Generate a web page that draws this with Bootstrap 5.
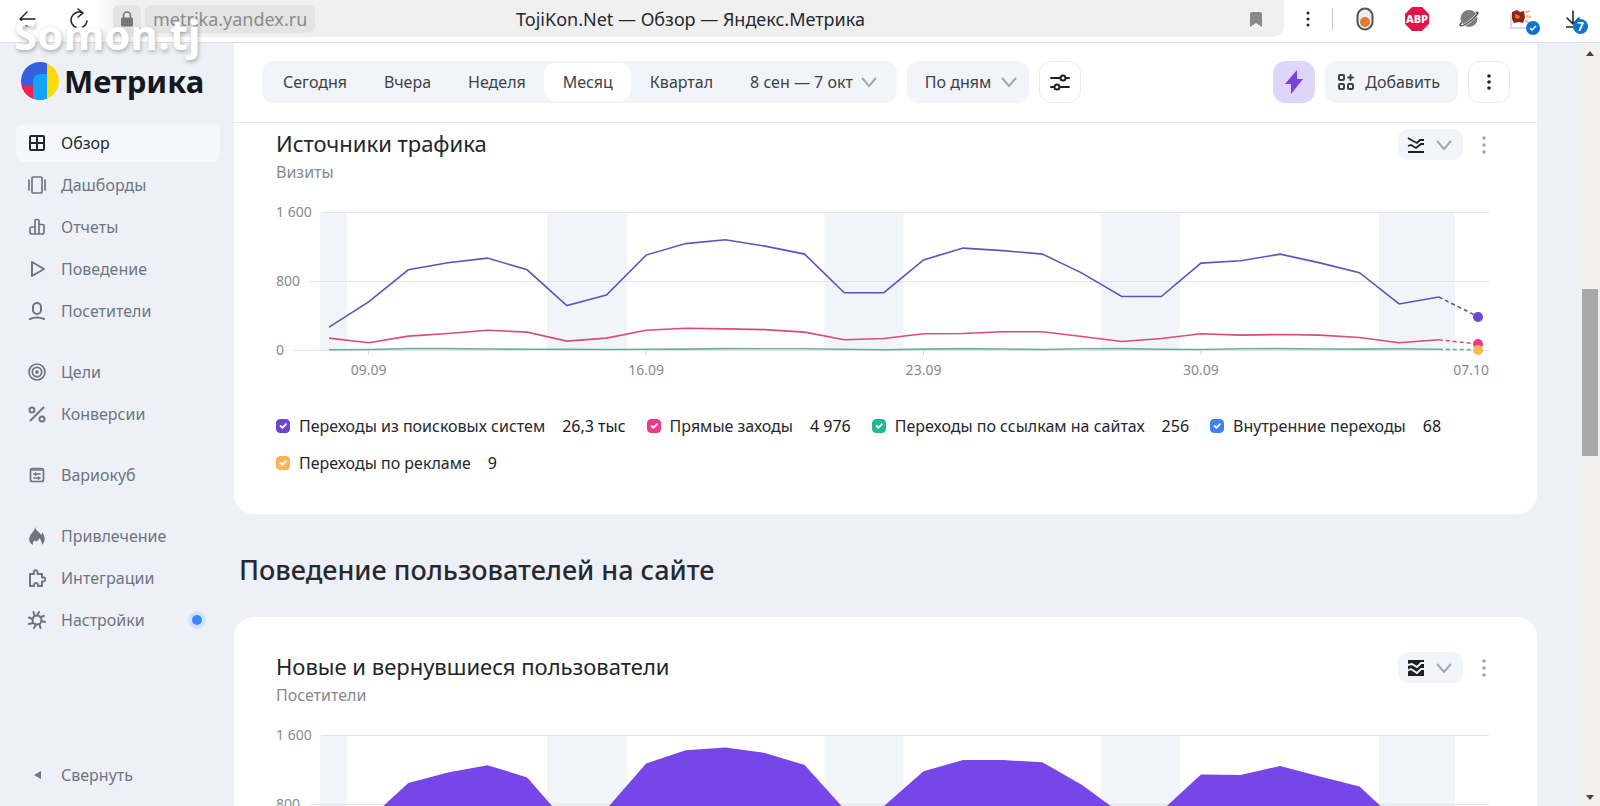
<!DOCTYPE html>
<html lang="ru">
<head>
<meta charset="utf-8">
<meta name="viewport" content="width=device-width, initial-scale=1">
<title>TojiKon.Net — Обзор — Яндекс.Метрика</title>
<link href="https://cdn.jsdelivr.net/npm/bootstrap@5.3.0/dist/css/bootstrap.min.css" rel="stylesheet">
<style>
  :root { --ink: #26282e; --dim: #6f7580; --page: #edf1f7; --soft: #f1f4f9; --hair: #e4e6ea; }
  body { font-family: "Noto Sans", "Open Sans", sans-serif; font-size: 16px; line-height: 24px; color: var(--ink); background: var(--page); }
  svg { display: block; flex: none; }
  .ln { fill: none; stroke: currentColor; stroke-width: 2; stroke-linecap: round; stroke-linejoin: round; }

  /* browser chrome */
  .chrome { height: 43px; background: #fff; border-bottom: 1px solid #dedfe2; }
  .navkeys { width: 97px; height: 38px; padding-left: 18px; gap: 33px; }
  .omnibox { display: grid; grid-template-columns: 1fr auto 1fr; height: 37px; border-radius: 0 0 10px 0; background: linear-gradient(90deg, #fff, #f0f0f0 24px); font-size: 18px; }
  .chip { background: #e4e4e4; height: 28px; border-radius: 6px; color: #8b8b8b; }
  .chip-lock { width: 28px; }
  .tools { width: 316px; height: 38px; padding-left: 22px; }
  .tools .vr { margin: 8px 6px 8px 22px; }
  .tool { width: 52px; display: flex; justify-content: center; }
  .tiny { position: absolute; right: -8px; bottom: -6px; }

  .watermark { position: absolute; left: 14px; top: 6px; font-size: 42px; line-height: 56px; font-weight: 700; color: #fff; text-shadow: 1px 2px 4px rgba(0,0,0,.3); pointer-events: none; }

  /* sidebar */
  .side { width: 234px; padding: 19px 14px 10px 16px; }
  .brand { font-size: 31px; line-height: 38px; font-weight: 700; color: #16181f; gap: 5px; padding-left: 5px; margin-bottom: 22px; text-decoration: none; }
  .side .nav-link { height: 38px; margin: 2px 0; padding: 0 12px; gap: 15px; display: flex; align-items: center; color: var(--dim); border-radius: 8px; }
  .side .nav-link svg { width: 18px; height: 18px; }
  .side .nav-link.active { background: #f5f8fd; color: var(--ink); }
  .side .split { margin-top: 21px; }
  .pulse { width: 10px; height: 10px; background: #3d86fb; box-shadow: 0 0 0 4px #cfe2fd; margin-right: 6px; }

  /* toolbar */
  .bar { height: 80px; background: #fff; padding: 18px 27px 0 28px; border-bottom: 1px solid var(--hair); gap: 10px; }
  .seg { background: var(--soft); border-radius: 12px; padding: 2px; height: 42px; }
  .seg .btn { border: 0; border-radius: 12px; padding: 0 18px 0 19px; height: 38px; color: #3f4148; display: flex; align-items: center; gap: 8px; }
  .seg .btn.active { background: #fff; color: #3f4148; }
  .sel { width: 122px; height: 42px; border: 0; border-radius: 12px; padding: 0 18px; background-color: var(--soft); color: #3f4148; font-size: 16px;
    --bs-form-select-bg-img: url("data:image/svg+xml,%3csvg xmlns='http://www.w3.org/2000/svg' viewBox='0 0 16 16'%3e%3cpath fill='none' stroke='%23a3a7b3' stroke-width='2' d='M1 4l7 8 7-8'/%3e%3c/svg%3e"); background-position: right 12px center; background-size: 16px 16px; }
  .sq { width: 42px; height: 42px; border-radius: 12px; border: 1px solid #e9ebf0; padding: 0; display: flex; align-items: center; justify-content: center; color: #1f2127; background: #fff; }
  .sq.bolt { background: #dfd5fa; border-color: #dfd5fa; color: #7544dd; }
  .add { height: 42px; border: 0; border-radius: 12px; background: var(--soft); padding: 0 18px 0 13px; display: flex; align-items: center; gap: 11px; color: #3f4148; }

  /* panels */
  .main { margin-right: 45px; min-width: 0; }
  .panel { background: #fff; border-radius: 0 0 20px 20px; padding: 0 48px 39px 42px; }
  .panel.full { border-radius: 20px; padding-top: 29px; }
  .panel h3 { font-size: 22px; line-height: 33px; font-weight: 400; margin: 0; padding-top: 4px; color: #22252b; }
  .panel .unit { color: #868a90; margin-bottom: 18px; }
  .actions { gap: 16px; padding-top: 6px; }
  .kind { height: 31px; width: 65px; border: 0; border-radius: 10px; background: var(--soft); padding: 0 11px 0 9px; display: flex; align-items: center; justify-content: space-between; color: #1f2127; }
  .more { border: 0; padding: 0; width: 10px; height: 31px; color: #a2a5ad; display: flex; align-items: center; justify-content: center; }
  .section { font-size: 27px; line-height: 40px; font-weight: 500; margin: 0; padding: 36px 5px 27px; color: #262932; }

  /* chart */
  .chart { position: relative; font-size: 14px; line-height: 20px; color: #868a90; }
  .gridline { height: 20px; margin-bottom: 49px; display: flex; align-items: center; gap: 9px; }
  .gridline:last-of-type { margin-bottom: 0; }
  .gridline::after { content: ""; flex: 1; height: 1px; background: #e2e4e8; }
  .plot { position: absolute; left: 44px; right: 0; top: 10px; height: 138px; }
  .plot svg { width: 100%; height: 100%; overflow: visible; }
  .plot path { vector-effect: non-scaling-stroke; }
  .day { position: absolute; top: 148px; transform: translateX(-50%); }
  .day.last { transform: none; left: auto; right: 0; }
  .pin { position: absolute; width: 10px; height: 10px; margin: -5px; border-radius: 50%; }

  /* legend */
  .legend { margin-top: 54px; column-gap: 21px; row-gap: 13px; }
  .legend label { display: flex; align-items: center; }
  .legend .form-check-input { width: 14px; height: 14px; margin: 0 9px 0 0; border-radius: 4px; background-color: var(--c); border-color: var(--c); }
  .legend b { font-weight: 400; margin-left: 17px; color: #17191e; }

  .scroller { width: 18px; background: #f2f1f0; padding: 8px 2px 6px 0; }
  .thumb { height: 167px; background: #a8a8a8; margin-top: 233px; }
</style>
</head>
<body class="vh-100 overflow-hidden d-flex flex-column">

<header class="chrome d-flex flex-shrink-0">
  <div class="navkeys d-flex align-items-center">
    <button class="btn p-0 border-0" aria-label="Назад"><svg width="18" height="18" viewBox="0 0 18 18" class="ln" style="stroke-width:1.4"><path d="M17 9H2M9 2L2 9l7 7"/></svg></button>
    <button class="btn p-0 border-0" aria-label="Обновить"><svg width="20" height="22" viewBox="0 0 20 22" class="ln" style="stroke-width:1.6"><path d="M14 5a8 8 0 1 0 4 8M9 1l5 4-5 4"/></svg></button>
  </div>
  <div class="omnibox flex-grow-1 align-items-center">
    <div class="d-flex align-items-center ps-3 gap-1">
      <span class="chip chip-lock d-flex align-items-center justify-content-center"><svg width="14" height="16" viewBox="0 0 14 16"><path d="M3.500 7V4.500a3.500 3.500 0 0 1 7 0V7" fill="none" stroke="#777" stroke-width="1.600"/><rect x="1" y="6.500" width="12" height="9" rx="1.500" fill="#777"/></svg></span>
      <span class="chip px-2 d-flex align-items-center">metrika.yandex.ru</span>
    </div>
    <div>TojiKon.Net — Обзор — Яндекс.Метрика</div>
    <div class="d-flex justify-content-end pe-3"><svg width="24" height="16" viewBox="0 0 24 16"><path d="M8 1h8a2 2 0 0 1 2 2v13l-6-4-6 4V3a2 2 0 0 1 2-2z" fill="#8a8a8a"/></svg></div>
  </div>
  <div class="tools d-flex align-items-center">
    <svg width="4" height="16" viewBox="0 0 4 16"><g fill="#222"><circle cx="2" cy="2" r="1.500"/><circle cx="2" cy="8" r="1.500"/><circle cx="2" cy="14" r="1.500"/></g></svg>
    <div class="vr opacity-10"></div>
    <div class="tool"><svg width="18" height="24" viewBox="0 0 18 24"><rect x="1.500" y="1.500" width="15" height="21" rx="7.500" fill="#eee" stroke="#555" stroke-width="2"/><circle cx="9" cy="15" r="5" fill="#e07b35"/></svg></div>
    <div class="tool"><svg width="24" height="24" viewBox="0 0 24 24"><path d="M7 0h10l7 7v10l-7 7H7l-7-7V7z" fill="#e2154a"/><text x="12" y="16" text-anchor="middle" font-size="11" font-weight="800" fill="#fff">ABP</text></svg></div>
    <div class="tool"><svg width="22" height="20" viewBox="0 0 22 20"><circle cx="11" cy="9.500" r="8.500" fill="#7d7d7d"/><path d="M4 13C-1 18 4 18 11 13S23 1 18 4" fill="none" stroke="#fff" stroke-width="2.600"/><path d="M4 13C-1 18 4 18 11 13S23 1 18 4" fill="none" stroke="#555" stroke-width="1.500"/></svg></div>
    <div class="tool"><span class="position-relative d-inline-block"><svg width="22" height="20" viewBox="0 0 22 20"><path d="M1 5v14h16" fill="none" stroke="#ddd" stroke-width="2"/><path d="M2 3l5-2 3 2 4-1 1 6-2 6-4-1-5 1-2-4z" fill="#8d2417"/><path d="M5 5l5 2-1 3-4-1z" fill="#d8742f"/><path d="M15 3l5-1M16 7l5 1M15 11l4 3" stroke="#e7b98a" stroke-width="2"/></svg><svg class="tiny" width="14" height="14" viewBox="0 0 14 14"><circle cx="7" cy="7" r="7" fill="#0b74d0"/><path d="M4 7l2 2 4-4" fill="none" stroke="#fff" stroke-width="1.500"/></svg></span></div>
    <div class="tool"><span class="position-relative d-inline-block"><svg width="14" height="18" viewBox="0 0 14 18" class="ln" style="stroke-width:1.600"><path d="M7 1v12M1 8l6 6 6-6M0 17h7"/></svg><svg class="tiny" width="15" height="15" viewBox="0 0 15 15"><circle cx="7.500" cy="7.500" r="7.500" fill="#0b74d0"/><text x="7.500" y="12" text-anchor="middle" font-size="12" font-weight="700" fill="#fff">7</text></svg></span></div>
  </div>
</header>
<div class="watermark">Somon.tj</div>

<div class="d-flex flex-grow-1 overflow-hidden">
  <aside class="side d-flex flex-column flex-shrink-0">
    <a href="#" class="brand d-flex align-items-center"><svg width="38" height="38" viewBox="0 0 38 38"><defs><clipPath id="disc"><circle cx="19" cy="19" r="19"/></clipPath></defs><g clip-path="url(#disc)"><path fill="#355fdc" d="M0 0h26v38H0z"/><path fill="#fc1f42" d="M0 24h13v14H0z"/><path fill="#10a4fc" d="M12 38V20q0-8 8-8h6v26z"/><path fill="#fadb08" d="M26 0h12v38H26z"/></g></svg>Метрика</a>
    <nav class="nav flex-column flex-nowrap flex-grow-1">
      <a class="nav-link active" href="#"><svg viewBox="0 0 18 18" class="ln"><rect x="2" y="2" width="14" height="14" rx="1"/><path d="M9 2v14M2 9h14"/></svg>Обзор</a>
      <a class="nav-link" href="#"><svg viewBox="0 0 18 18" class="ln" style="stroke-width:1.700"><rect x="4" y="1" width="10" height="16" rx="1"/><path d="M1 4v10M17 4v10"/></svg>Дашборды</a>
      <a class="nav-link" href="#"><svg viewBox="0 0 18 18" class="ln" style="stroke-width:1.700"><path d="M7 16V3q0-1.500 2-1.500T11 3v13M7 9H3.500Q2 9 2 11v3q0 2 2 2h10q2 0 2-2V8q0-1.500-2-1.500h-3"/></svg>Отчеты</a>
      <a class="nav-link" href="#"><svg viewBox="0 0 18 18" class="ln"><path d="M4 2l12 7-12 7z"/></svg>Поведение</a>
      <a class="nav-link" href="#"><svg viewBox="0 0 18 18" class="ln"><rect x="5" y="1" width="8" height="11" rx="4"/><path d="M2 17q7-3 14 0"/></svg>Посетители</a>
      <a class="nav-link split" href="#"><svg viewBox="0 0 18 18" class="ln" style="stroke-width:1.700"><circle cx="9" cy="9" r="8"/><circle cx="9" cy="9" r="4.700"/><circle cx="9" cy="9" r="1"/></svg>Цели</a>
      <a class="nav-link" href="#"><svg viewBox="0 0 18 18" class="ln"><circle cx="4" cy="5" r="2.500"/><circle cx="14" cy="14" r="2.500"/><path d="M15.500 2.500l-13 13"/></svg>Конверсии</a>
      <a class="nav-link split" href="#"><svg viewBox="0 0 18 18" class="ln" style="stroke-width:1.700"><rect x="2.500" y="2.500" width="13" height="13" rx="2"/><path d="M3 4h12M6 8h6M7.500 7v2M6 12h6M10.500 11v2"/></svg>Вариокуб</a>
      <a class="nav-link split" href="#"><svg viewBox="0 0 18 18"><path fill="currentColor" d="M7 0c1 4 5 5 6 8 1-1 1-2 1-3 3 4 4 9 0 13 0-3-1-5-3-7 0 3-2 2-3 4-.5-1-1-1-1-2-1.500 1-2.500 2.500-2 5C-1 15 1 9 4 6c1-2 3-3 3-6z"/></svg>Привлечение</a>
      <a class="nav-link" href="#"><svg viewBox="0 0 18 18" class="ln"><path d="M2 5h4C4.500 0 10.500 0 9.500 5H14v3.500c4.500-1 4.500 4.500 0 4V17h-4c.5-4-4.500-4-4 0H2z"/></svg>Интеграции</a>
      <a class="nav-link" href="#"><svg viewBox="0 0 18 18" class="ln"><circle cx="9" cy="9" r="4.500"/><path d="M9 4.500L11 1M12 6l4-1M13.500 10l3.500 1M11.500 13l1 4M8 13.500L6 17M5 12l-4 1M4.500 8L1 6.500M6.500 5l-1-4"/></svg>Настройки<span class="pulse rounded-circle ms-auto"></span></a>
      <a class="nav-link mt-auto" href="#"><svg viewBox="0 0 18 18"><path fill="currentColor" d="M13 5v8L6 9z"/></svg>Свернуть</a>
    </nav>
  </aside>

  <main class="main flex-grow-1">
    <div class="bar d-flex">
      <div class="seg d-flex">
        <button class="btn">Сегодня</button>
        <button class="btn">Вчера</button>
        <button class="btn">Неделя</button>
        <button class="btn active">Месяц</button>
        <button class="btn">Квартал</button>
        <button class="btn">8 сен — 7 окт <svg width="16" height="16" viewBox="0 0 16 16" fill="none" stroke="#a3a7b3" stroke-width="2"><path d="M1 4l7 8 7-8"/></svg></button>
      </div>
      <select class="form-select sel" aria-label="Группировка"><option>По дням</option></select>
      <button class="sq" aria-label="Фильтры"><svg width="20" height="18" viewBox="0 0 20 18" class="ln"><path d="M1 5h9M16 5h3M1 14h3M10 14h9"/><circle cx="13" cy="5" r="2.500"/><circle cx="7" cy="14" r="2.500"/></svg></button>
      <button class="sq bolt ms-auto" aria-label="Быстрый доступ"><svg width="18" height="24" viewBox="0 0 18 24"><path fill="currentColor" d="M12 0L0 14h6L6 24 18 9h-6z"/></svg></button>
      <button class="add"><svg width="16" height="16" viewBox="0 0 16 16" class="ln"><rect x="1" y="1" width="5" height="5" rx="1"/><rect x="1" y="10" width="5" height="5" rx="1"/><rect x="10" y="10" width="5" height="5" rx="1"/><path d="M12.500 1v5M10 3.500h5"/></svg>Добавить</button>
      <button class="sq" aria-label="Ещё"><svg width="4" height="16" viewBox="0 0 4 16" fill="currentColor"><circle cx="2" cy="2" r="1.800"/><circle cx="2" cy="8" r="1.800"/><circle cx="2" cy="14" r="1.800"/></svg></button>
    </div>

    <section class="panel">
      <div class="d-flex">
        <div class="flex-grow-1"><h3>Источники трафика</h3><div class="unit">Визиты</div></div>
        <div class="actions d-flex">
          <button class="kind" aria-label="Вид графика"><svg width="18" height="18" viewBox="0 0 18 18" fill="none" stroke="currentColor" stroke-width="1.800"><path d="M1 2l5 3 4 2 3-3h4M1 10l3-1 5 3 5-4h3M1 16h16"/></svg><svg width="16" height="16" viewBox="0 0 16 16" fill="none" stroke="#a3a7b3" stroke-width="2"><path d="M1 4l7 8 7-8"/></svg></button>
          <button class="more bg-transparent" aria-label="Меню"><svg width="4" height="18" viewBox="0 0 4 18" fill="currentColor"><circle cx="2" cy="2" r="1.800"/><circle cx="2" cy="9" r="1.800"/><circle cx="2" cy="16" r="1.800"/></svg></button>
        </div>
      </div>
      <div class="chart" id="sources"></div>
      <div class="legend d-flex flex-wrap">
        <label style="--c:#6c45cf"><input class="form-check-input" type="checkbox" checked>Переходы из поисковых систем<b>26,3 тыс</b></label>
        <label style="--c:#ed3a8c"><input class="form-check-input" type="checkbox" checked>Прямые заходы<b>4 976</b></label>
        <label style="--c:#1fb98d"><input class="form-check-input" type="checkbox" checked>Переходы по ссылкам на сайтах<b>256</b></label>
        <label style="--c:#3e82ee"><input class="form-check-input" type="checkbox" checked>Внутренние переходы<b>68</b></label>
        <label style="--c:#f6b755"><input class="form-check-input" type="checkbox" checked>Переходы по рекламе<b>9</b></label>
      </div>
    </section>

    <h2 class="section">Поведение пользователей на сайте</h2>

    <section class="panel full">
      <div class="d-flex">
        <div class="flex-grow-1"><h3>Новые и вернувшиеся пользователи</h3><div class="unit">Посетители</div></div>
        <div class="actions d-flex">
          <button class="kind" aria-label="Вид графика"><svg width="18" height="18" viewBox="0 0 18 18"><path fill="currentColor" d="M1 1h16v16H1z"/><path d="M0 6l5-1 5 3 4-4h4M0 12l4-2 6 4 4-4h4" fill="none" stroke="#f1f4f9" stroke-width="1.800"/></svg><svg width="16" height="16" viewBox="0 0 16 16" fill="none" stroke="#a3a7b3" stroke-width="2"><path d="M1 4l7 8 7-8"/></svg></button>
          <button class="more bg-transparent" aria-label="Меню"><svg width="4" height="18" viewBox="0 0 4 18" fill="currentColor"><circle cx="2" cy="2" r="1.800"/><circle cx="2" cy="9" r="1.800"/><circle cx="2" cy="16" r="1.800"/></svg></button>
        </div>
      </div>
      <div class="chart" id="users"></div>
    </section>
  </main>

  <div class="scroller flex-shrink-0 d-flex flex-column">
    <svg class="mx-auto" width="8" height="5" viewBox="0 0 8 5"><path d="M0 5l4-5 4 5z" fill="#444"/></svg>
    <div class="thumb"></div>
    <svg class="mx-auto mt-auto" width="8" height="5" viewBox="0 0 8 5"><path d="M0 0l4 5 4-5z" fill="#444"/></svg>
  </div>
</div>

<script src="https://cdn.jsdelivr.net/npm/bootstrap@5.3.0/dist/js/bootstrap.bundle.min.js"></script>
<script>
  // Plot space: 1168 x 138 units, one day every STEP units, 1600 visits at the top.
  const W = 1168, H = 138, X0 = 9, STEP = 39.6, MAX = 1600;
  const px = i => X0 + i * STEP, py = v => H - v / MAX * H;
  const line = (a, from = 0) => a.map((v, i) => (i ? 'L' : 'M') + px(i + from).toFixed(1) + ' ' + py(v).toFixed(1)).join('');

  const search = [266,559,930,1012,1065,930,516,637,1100,1234,1278,1205,1112,664,666,1045,1181,1153,1112,892,620,620,1007,1034,1112,1010,896,533,614,385];
  const direct = [138,84,161,191,230,207,103,138,230,253,245,237,207,118,133,188,191,211,211,157,99,133,188,173,180,173,145,84,118,68];
  const links  = [4,6,16,16,12,9,8,6,8,10,16,14,14,9,4,10,16,12,6,14,16,8,6,14,16,12,10,14,8,4];
  const people = [430,620,1045,1166,1250,1108,580,742,1270,1424,1455,1393,1252,742,776,1180,1310,1310,1284,1020,684,718,1142,1136,1242,1120,1002,580,638,500];

  const bands = [[0,27],[227,307],[504,583],[780,859],[1058,1134]];
  const days = [[1,'09.09'],[8,'16.09'],[15,'23.09'],[22,'30.09'],[29,'07.10']];

  function chart(id, drawing, pins = '') {
    document.getElementById(id).innerHTML =
      ['1 600', '800', '0'].map(t => `<div class="gridline">${t}</div>`).join('') +
      `<div class="plot"><svg viewBox="0 0 ${W} ${H}" preserveAspectRatio="none" fill="none">` +
      bands.map(([a, b]) => `<path d="M${a} 1H${b}V${H}H${a}z" fill="#dce4ef" fill-opacity=".4"/>`).join('') +
      days.slice(0, 4).map(([i]) => `<path d="M${px(i)} ${H}v5" stroke="#d5d8dd"/>`).join('') +
      drawing + '</svg>' + pins +
      days.map(([i, t]) => `<span class="day${i === 29 ? ' last' : ''}"${i === 29 ? '' : ` style="left:${px(i) / W * 100}%"`}>${t}</span>`).join('') + '</div>';
  }
  const stroke = (a, c) => `<path d="${line(a.slice(0, 29))}" stroke="${c}" stroke-width="1.6"/><path d="${line(a.slice(28), 28)}" stroke="${c}" stroke-width="1.6" stroke-dasharray="4 3"/>`;
  const pin = (v, c) => `<span class="pin" style="left:${px(29) / W * 100}%;top:${py(v) / H * 100}%;background:${c}"></span>`;

  chart('sources', stroke(links, '#6fae9d') + stroke(direct, '#d94a7d') + stroke(search, '#6650bd'),
    pin(385, '#6a48dc') + pin(68, '#ee3a84') + pin(4, '#f9b750'));
  chart('users', `<path d="${line(people)}V${H}H${X0}z" fill="#7646e8"/>`);
</script>
</body>
</html>
